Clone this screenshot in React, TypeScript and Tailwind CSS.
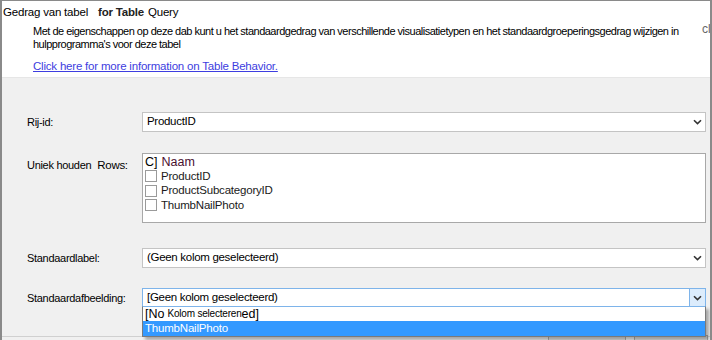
import React from "react";

const font = "font-['Segoe_UI','Liberation_Sans',Arial,sans-serif]";

function Chevron({ className = "" }: { className?: string }) {
	return (
		<svg width="9" height="6" viewBox="0 0 9 6" className={className}>
			<path d="M1 1.2 L4.5 4.6 L8 1.2" fill="none" stroke="#333" strokeWidth="1.6" />
		</svg>
	);
}

function Select({ value, focused = false }: { value: string; focused?: boolean }) {
	return (
		<div
			className={`flex h-[20px] w-[564px] items-center border bg-white ${
				focused ? "border-[#7eb4ea]" : "border-[#c4c4c4]"
			}`}
		>
			<span className="flex-1 pl-[4px] text-[11.5px] leading-none tracking-[-0.3px] text-black">{value}</span>
			{focused ? (
				<div className="flex h-full w-[16px] items-center justify-center border-l border-[#7eb4ea] bg-[#dcecfc]">
					<Chevron />
				</div>
			) : (
				<div className="flex h-full w-[16px] items-center justify-center">
					<Chevron />
				</div>
			)}
		</div>
	);
}

function Check({ label }: { label: string }) {
	return (
		<div className="flex h-[14.5px] items-center gap-[4px]">
			<span className="h-[12px] w-[12px] border border-[#9a9a9a] bg-white" />
			<span className="text-[11.5px] leading-none tracking-[-0.2px] text-[#1a1a1a]">{label}</span>
		</div>
	);
}

export default function App() {
	return (
		<div
			className={`relative h-[340px] w-[712px] overflow-hidden border-t border-r-2 border-l-2 border-[#8a8a8a] bg-[#f0f0f0] ${font}`}
		>
			{/* header */}
			<div className="h-[77px] border-b border-[#e6e6e6] bg-white">
				<div className="flex items-baseline pt-[3px] pl-[1px] text-[11.5px] tracking-[-0.2px] text-black">
					<span>Gedrag van tabel</span>
					<span className="ml-[10px] font-bold text-[#222]">for Table</span>
					<span className="ml-[4px]">Query</span>
				</div>
				<div className="relative pt-[4px] pl-[31px] text-[11px] leading-[13px] tracking-[-0.5px] whitespace-nowrap text-black">
					<p>
						Met de eigenschappen op deze dab kunt u het standaardgedrag van verschillende visualisatietypen en het
						standaardgroeperingsgedrag wijzigen in
					</p>
					<p>hulpprogramma's voor deze tabel</p>
					<span className="absolute top-[2px] left-[700px] text-[12px] tracking-normal text-[#666]">cl</span>
				</div>
				<a className="mt-[10px] ml-[31px] block text-[11.5px] leading-none tracking-[-0.2px] text-[#3d3de0] underline">
					Click here for more information on Table Behavior.
				</a>
			</div>

			{/* body */}
			<div className="pl-[25px] text-[11px] tracking-[-0.3px] text-black">
				<div className="mt-[34px] flex items-center">
					<span className="w-[115px]">Rij-id:</span>
					<Select value="ProductID" />
				</div>

				<div className="mt-[21px] flex">
					<div className="flex w-[115px] items-start pt-[4px]">
						<span>Uniek houden</span>
						<span className="ml-[6px] text-[11.5px]">Rows:</span>
					</div>
					<div className="h-[70px] w-[564px] border border-[#a8a8a8] bg-white pt-[1px] pl-[2px]">
						<div className="flex h-[14px] items-center text-[12.5px] leading-none tracking-normal">
							<span>C]</span>
							<span className="ml-[4px] text-[#4a1030]">Naam</span>
						</div>
						<Check label="ProductID" />
						<Check label="ProductSubcategoryID" />
						<Check label="ThumbNailPhoto" />
					</div>
				</div>

				<div className="mt-[25px] flex items-center">
					<span className="w-[115px]">Standaardlabel:</span>
					<Select value="(Geen kolom geselecteerd)" />
				</div>

				<div className="mt-[20px] flex items-center">
					<span className="w-[115px]">Standaardafbeelding:</span>
					<Select value="[Geen kolom geselecteerd)" focused />
				</div>
			</div>

			{/* buttons behind the dropdown */}
			<div className="absolute top-[335px] left-0 h-[10px] w-full border-t border-[#d0d0d0]">
				<div className="absolute top-[-2px] left-[546px] flex h-[12px] w-[78px] justify-center border border-[#adadad] bg-[#e1e1e1] text-[11px] leading-[16px]">
					OK
				</div>
				<div className="absolute top-[-2px] left-[632px] flex h-[12px] w-[74px] justify-center border border-[#adadad] bg-[#e1e1e1] text-[11px] leading-[16px]">
					Cancel
				</div>
			</div>

			{/* open dropdown */}
			<div className="absolute top-[305px] left-[140px] w-[564px] border border-[#7a7a7a] border-t-[#7eb4ea] bg-white shadow-[3px_3px_3px_rgba(0,0,0,0.3)]">
				<div className="flex h-[14px] items-center pl-[2px] text-black">
					<span className="text-[12.5px] leading-none">[No</span>
					<span className="ml-[3px] text-[10px] leading-none tracking-[-0.2px]">Kolom selecteren</span>
					<span className="text-[12.5px] leading-none">ed]</span>
				</div>
				<div className="flex h-[15px] items-center bg-[#3399ff] pl-[2px] text-[11.5px] leading-none tracking-[-0.2px] text-white">
					ThumbNailPhoto
				</div>
			</div>
		</div>
	);
}
